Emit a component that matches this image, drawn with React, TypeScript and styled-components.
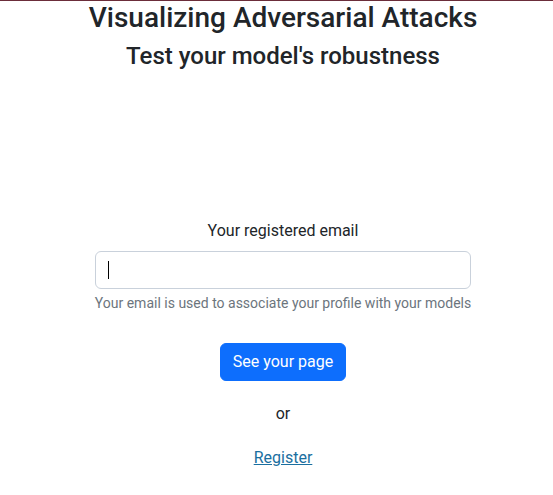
import React from "react";
import styled, { createGlobalStyle } from "styled-components";

const Global = createGlobalStyle`
  html, body { margin: 0; padding: 0; background: #fff; }
  body {
    font-family: Roboto, "Liberation Sans", sans-serif;
    font-size: 16px;
    line-height: 1.5;
    color: #212529;
    border-top: 1px solid #6b2d3a;
  }
  * { box-sizing: border-box; }
`;

const Page = styled.div`
  display: flex;
  flex-direction: column;
  align-items: center;
  text-align: center;
  padding-left: 13px;
`;

const Title = styled.h1`
  margin: 0;
  font-size: 28px;
  font-weight: 500;
  line-height: 1.2;
`;

const Subtitle = styled.h2`
  margin: 7px 0 0;
  font-size: 24px;
  font-weight: 500;
  line-height: 1.2;
`;

const Form = styled.form`
  margin-top: 149px;
  width: 376px;
  display: flex;
  flex-direction: column;
  align-items: center;
`;

const Label = styled.label`
  display: block;
  margin-bottom: 8px;
`;

const Field = styled.div`
  position: relative;
  width: 100%;
`;

const Input = styled.input`
  display: block;
  width: 100%;
  height: 38px;
  padding: 6px 12px;
  font: inherit;
  color: #212529;
  border: 1px solid #c9d1db;
  border-radius: 6px;
  outline: none;
  caret-color: transparent;
`;

const Caret = styled.span`
  position: absolute;
  left: 13px;
  top: 10px;
  width: 1px;
  height: 18px;
  background: #000;
  pointer-events: none;
`;

const Help = styled.div`
  margin-top: 4px;
  font-size: 14px;
  color: #6c757d;
  white-space: nowrap;
`;

const Button = styled.button`
  margin-top: 29px;
  height: 38px;
  padding: 6px 12px;
  font: inherit;
  color: #fff;
  background: #0d6efd;
  border: 1px solid #0d6efd;
  border-radius: 6px;
`;

const Or = styled.p`
  margin: 21px 0 0;
`;

const Link = styled.a`
  margin-top: 20px;
  color: #1a6fa0;
  text-decoration: underline;
`;

export default function App() {
  return (
    <>
      <Global />
      <Page>
        <Title>Visualizing Adversarial Attacks</Title>
        <Subtitle>Test your model's robustness</Subtitle>
        <Form onSubmit={(e) => e.preventDefault()}>
          <Label htmlFor="email">Your registered email</Label>
          <Field>
            <Input id="email" type="email" />
            <Caret />
          </Field>
          <Help>Your email is used to associate your profile with your models</Help>
          <Button type="submit">See your page</Button>
          <Or>or</Or>
          <Link href="#">Register</Link>
        </Form>
      </Page>
    </>
  );
}
